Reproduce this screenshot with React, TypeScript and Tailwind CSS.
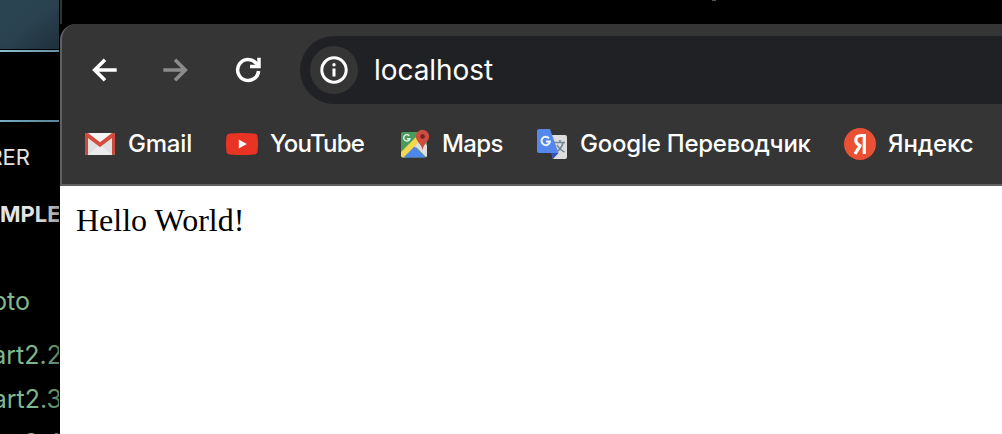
import type { ReactNode } from "react";

function GmailIcon() {
  return (
    <svg width="32" height="32" viewBox="0 0 32 32">
      <rect x="1" y="5" width="30" height="22" rx="2" fill="#e0e0e0" />
      <path d="M4 27 16 16l12 11z" fill="#ececec" />
      <path d="M3 5h26L16 14.500z" fill="#f4f4f4" />
      <path d="M1 7q0-2 2-2l1 3v19H3q-2 0-2-2zM31 7q0-2-2-2l-1 3v19h1q2 0 2-2z" fill="#c8493d" />
      <path d="M2.500 5H4l12 9.200L28 5h1.500q1.500.5 1.300 3L16 19 1.200 8q-.2-2.500 1.300-3z" fill="#d54b3d" />
    </svg>
  );
}

function YouTubeIcon() {
  return (
    <svg width="32" height="32" viewBox="0 0 32 32">
      <path d="M4 5.400Q16 4.400 28 5.400q3.200.3 3.600 3.600.8 7 0 14-.4 3.300-3.600 3.600-12 1-24 0Q.8 26.300 .4 23-.4 16 .4 9 .8 5.700 4 5.400z" fill="#e93323" />
      <path d="M12.800 11.400v9.200l8-4.600z" fill="#fff" />
    </svg>
  );
}

function MapsIcon() {
  return (
    <svg width="32" height="32" viewBox="0 0 32 32">
      <defs>
        <clipPath id="map-sheet">
          <rect x="1" y="4" width="26" height="25.500" rx="2" />
        </clipPath>
      </defs>
      <g clipPath="url(#map-sheet)">
        <rect x="1" y="4" width="26" height="26" fill="#4a9c5c" />
        <path d="M0 25 17 8l6 5L4 31H0z" fill="#f4d84e" />
        <path d="m15 18 8-8 4 8v12z" fill="#dedede" />
        <path d="M3 30 14.500 18.500 26 30z" fill="#4f86ec" />
      </g>
      <path d="M9.300 7.800a3.200 3.200 0 1 0 .6 3H7" fill="none" stroke="#e5f3e8" strokeWidth="1.400" />
      <path d="M22.500 1.800a6.600 6.600 0 0 0-6.600 6.600c0 5 5.300 7 6.600 13.500 1.300-6.500 6.600-8.500 6.600-13.500a6.600 6.600 0 0 0-6.600-6.600z" fill="#cf4d3f" />
      <circle cx="22.600" cy="8.400" r="2.300" fill="#74261f" />
    </svg>
  );
}

function TranslateIcon() {
  return (
    <svg width="32" height="32" viewBox="0 0 32 32">
      <path d="M12 7h17q2 0 2 2v20q0 2-2 2H17z" fill="#dddddd" />
      <path d="M15 25h7.500L17 31z" fill="#3451b5" />
      <g fill="none" stroke="#718793" strokeWidth="1.600">
        <path d="M18 14.500h11M24 12v2.500M27 15q-1.500 6-7 9M21 17q2 4 7.500 7" />
      </g>
      <path d="M3 1h11l8.500 24H3q-2 0-2-2V3q0-2 2-2z" fill="#5688ec" />
      <path d="M13 10.300a4.200 4.200 0 1 0 .9 3.200H10" fill="none" stroke="#edf3fe" strokeWidth="2" />
    </svg>
  );
}

function YandexIcon() {
  return (
    <svg width="32" height="32" viewBox="0 0 32 32">
      <circle cx="16" cy="16" r="16" fill="#ea5033" />
      <path d="M20.300 26V7.500H17.300q-5.500 0-5.500 4.800 0 2.700 2.500 4.200l2.700 1.800M16.300 17.300 11 26" fill="none" stroke="#fff" strokeWidth="3.200" />
    </svg>
  );
}

function Bookmark({ className, icon, children }: { className: string; icon: ReactNode; children: ReactNode }) {
  return (
    <div className={`flex h-8 shrink-0 items-center whitespace-nowrap ${className}`}>
      <span className="shrink-0">{icon}</span>
      <span>{children}</span>
    </div>
  );
}

function Sidebar() {
  return (
    <aside className="relative flex h-full w-[60px] shrink-0 flex-col overflow-hidden border-r border-black bg-black font-['Inter','Liberation_Sans',sans-serif] whitespace-nowrap">
      <div className="h-[49px] shrink-0 bg-linear-to-br from-[#2b4552] via-[#2a424f] to-[#1d303a]" />
      <div className="mt-px h-[2px] shrink-0 bg-linear-to-r from-[#8fc0d1] to-[#67909f]" />
      <div className="mt-[68px] h-[2px] shrink-0 bg-linear-to-r from-[#78afc1] to-[#568596]" />
      <div className="mt-[20px] flex h-[30px] w-[30px] shrink-0 items-center justify-end text-[22px] text-[#e4e4e4]">RER</div>
      <div className="mt-[27px] flex h-[30px] shrink-0 items-center text-[22px] font-bold text-[#e4e4e4]">MPLE</div>
      <div className="mt-[57px] flex h-[32px] w-[30px] shrink-0 items-center justify-end text-[25px] text-[#80b78d]">pto</div>
      <div className="mt-[22px] flex h-[32px] w-[62px] shrink-0 items-center justify-end text-[25px] text-[#80b78d]">art2.2</div>
      <div className="mt-[12px] flex h-[32px] w-[62px] shrink-0 items-center justify-end text-[25px] text-[#80b78d]">art2.3</div>
      <div className="mt-[12px] flex h-[32px] w-[62px] shrink-0 items-center justify-end text-[25px] text-[#80b78d]">rt2.4</div>
      <div className="absolute top-[200px] right-0 h-[234px] w-6 bg-linear-to-r from-transparent to-black/30" />
    </aside>
  );
}

export default function App() {
  return (
    <div className="flex h-[434px] w-[1002px] overflow-hidden bg-black">
      <Sidebar />
      <main className="relative flex min-w-0 flex-1 flex-col">
        <div className="flex h-6 shrink-0 border-l-2 border-[#333333] bg-black">
          <span className="ml-[650px] h-px w-1 bg-[#555555]" />
        </div>
        <header className="h-[162px] shrink-0 overflow-hidden rounded-tl-[16px] border-b-2 border-l-2 border-[#606060] bg-[#353535] font-['Inter','Liberation_Sans',sans-serif] text-white">
          <div className="mt-3 flex h-[68px] items-center pl-[26px]">
            <svg width="32" height="32" viewBox="0 0 32 32" fill="none" stroke="#fff" strokeWidth="3.600">
              <path d="M28.700 16H7M17 5.700 6.700 16 17 26.300" />
            </svg>
            <svg className="ml-[40px]" width="32" height="32" viewBox="0 0 32 32" fill="none" stroke="#8b8b8b" strokeWidth="3.600">
              <path d="M3.300 16H25M15 5.700 25.300 16 15 26.300" />
            </svg>
            <svg className="ml-[40px]" width="32" height="32" viewBox="0 0 32 32" fill="none" stroke="#fff" strokeWidth="3.500">
              <path d="M26.600 17A10.500 10.500 0 1 1 24 9l2.500 2.500" />
              <path d="M27 3.800v8.700H18" />
            </svg>
            <div className="ml-[36px] flex h-[68px] flex-1 items-center rounded-l-full bg-[#202124] pl-[10px]">
              <div className="flex size-12 items-center justify-center rounded-full bg-[#353535]">
                <svg width="28" height="28" viewBox="0 0 28 28">
                  <circle cx="14" cy="14" r="12.200" fill="none" stroke="#fff" strokeWidth="3" />
                  <circle cx="14" cy="8.700" r="1.700" fill="#fff" />
                  <path d="M14 12.500v8" stroke="#fff" strokeWidth="3" />
                </svg>
              </div>
              <span className="ml-4 text-[28px] tracking-[-0.05px]">localhost</span>
            </div>
          </div>
          <nav className="mt-6 flex h-8 items-center text-[24px] font-medium">
            <Bookmark className="ml-[22px] w-[142px] gap-3 tracking-[-0.2px]" icon={<GmailIcon />}>Gmail</Bookmark>
            <Bookmark className="w-[174px] gap-3 tracking-[-0.8px]" icon={<YouTubeIcon />}>YouTube</Bookmark>
            <Bookmark className="w-[136px] gap-2.5 tracking-[-0.65px]" icon={<MapsIcon />}>Maps</Bookmark>
            <Bookmark className="w-[308px] gap-3 tracking-[-0.23px]" icon={<TranslateIcon />}>Google Переводчик</Bookmark>
            <Bookmark className="w-[150px] gap-3 tracking-[-0.1px]" icon={<YandexIcon />}>Яндекс</Bookmark>
          </nav>
        </header>
        <section className="flex-1 bg-white pt-4 pl-4 font-['Liberation_Serif',serif] text-[32px] leading-[37px] text-black">
          Hello World!
        </section>
      </main>
    </div>
  );
}
